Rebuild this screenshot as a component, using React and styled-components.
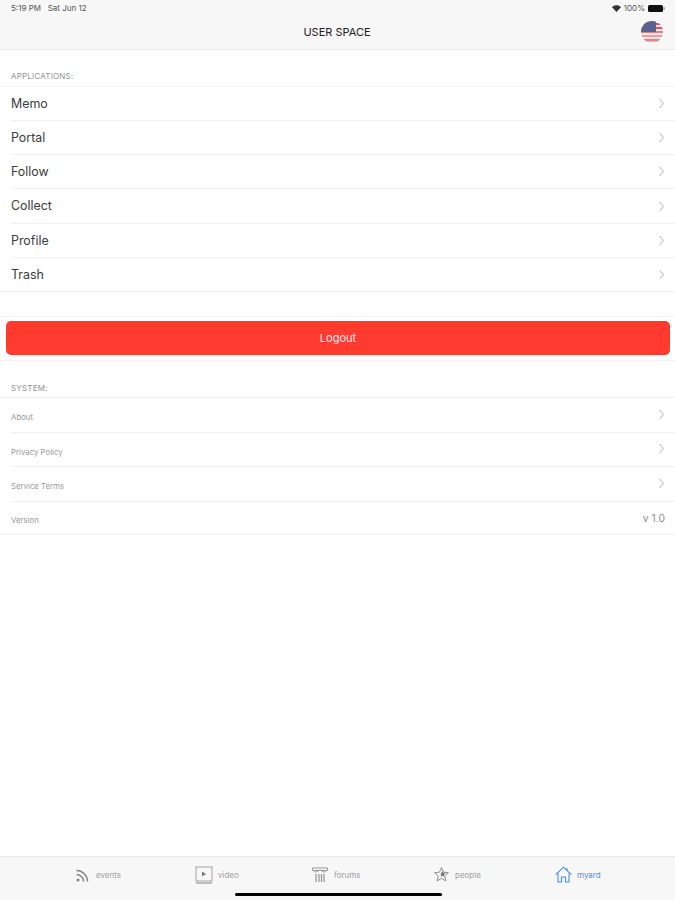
import React from "react";
import styled, {createGlobalStyle} from "styled-components";

const GlobalStyle = createGlobalStyle`
    html, body {
        margin: 0;
        padding: 0;
        background: #fff;
        font-family: Inter, "Liberation Sans", sans-serif;
    }
`;

const Page = styled.div`
    width: 675px;
    height: 900px;
    display: flex;
    flex-direction: column;
    overflow: hidden;
    position: relative;
`;

const TopBar = styled.header`
    height: 50px;
    flex: none;
    box-sizing: border-box;
    background: #f7f7f7;
    border-bottom: 1px solid #e9e9e9;
    display: flex;
    flex-direction: column;
`;

const StatusBar = styled.div`
    height: 16px;
    padding: 0 10px 0 11px;
    display: flex;
    align-items: center;
    justify-content: space-between;
    font-size: 8px;
    color: #555;
`;

const StatusRight = styled.div`
    display: flex;
    align-items: center;
    gap: 3px;
`;

const NavRow = styled.div`
    flex: 1;
    display: grid;
    grid-template-columns: 1fr auto 1fr;
    align-items: center;
    padding: 0 12px 2px 11px;
`;

const NavTitle = styled.div`
    font-size: 11px;
    color: #222;
    margin-top: 1px;
`;

const FlagWrap = styled.div`
    justify-self: end;
    width: 22px;
    height: 22px;
`;

const Content = styled.main`
    flex: 1;
`;

const SectionLabel = styled.div`
    height: ${props => props.height}px;
    box-sizing: border-box;
    padding: 0 11px ${props => props.bottom}px;
    display: flex;
    align-items: flex-end;
    font-size: 8px;
    color: #929292;
    letter-spacing: 0.2px;
    border-bottom: 1px solid #f1f1f1;
`;

const Row = styled.div`
    height: ${props => props.height}px;
    box-sizing: border-box;
    margin-left: ${props => props.last ? 0 : 11}px;
    padding: 0 10px 0 ${props => props.last ? 11 : 0}px;
    display: flex;
    align-items: center;
    justify-content: space-between;
    border-bottom: 1px solid #f0f0f0;
`;

const AppName = styled.span`
    font-size: 12.4px;
    color: #3a3a3a;
    margin-bottom: 1px;
`;

const SystemName = styled.span`
    font-size: 7.8px;
    color: #989898;
    margin-top: 4px;
`;

const RowChevron = styled.span`
    display: flex;
    margin-bottom: ${props => props.raised ? 2 : 0}px;
`;

const VersionText = styled.span`
    font-size: 10.4px;
    color: #8f8f8f;
`;

const LogoutBand = styled.div`
    margin-top: 24px;
    padding: 4px 5px 5px 6px;
    border-top: 1px solid #f4f4f4;
    border-bottom: 1px solid #f4f4f4;
`;

const LogoutButton = styled.button`
    display: block;
    width: 100%;
    height: 34px;
    padding: 0;
    border: none;
    border-radius: 5px;
    background: #ff3b30;
    color: #fdf0ef;
    font-family: inherit;
    font-size: 11px;
`;

const TabBar = styled.nav`
    height: 44px;
    flex: none;
    box-sizing: border-box;
    background: #f7f7f7;
    border-top: 1px solid #e9e9e9;
    display: flex;
    align-items: flex-start;
    padding: 9px 0 0 75px;
`;

const Tab = styled.div`
    width: ${props => props.width}px;
    display: flex;
    align-items: center;
    gap: 5px;
    font-size: 8px;
    color: ${props => props.active ? "#4a8ff0" : "#a0a0a0"};
`;

const HomeIndicator = styled.div`
    position: absolute;
    left: 235px;
    bottom: 4px;
    width: 207px;
    height: 3px;
    border-radius: 2px;
    background: #000;
`;

const Chevron = () => (
    <svg width="7" height="11" viewBox="0 0 7 11" fill="none" stroke="#cfcfd1" strokeWidth="1.2">
        <path d="M1.500 1l4 4.500-4 4.500" />
    </svg>
);

const WifiIcon = () => (
    <svg width="9" height="7" viewBox="0 0 9 7" fill="#333">
        <path d="M4.500 7L0 2.200C2.600-.4 6.400-.4 9 2.200z" />
    </svg>
);

const BatteryIcon = () => (
    <svg width="17" height="7" viewBox="0 0 17 7">
        <rect x="0" y="0" width="15" height="7" rx="1.5" fill="#111" />
        <rect x="15.500" y="2.200" width="1.200" height="2.600" fill="#888" />
    </svg>
);

const FlagIcon = () => (
    <svg width="22" height="22" viewBox="0 0 22 22">
        <defs>
            <clipPath id="flagClip"><circle cx="11" cy="11" r="11" /></clipPath>
        </defs>
        <g clipPath="url(#flagClip)">
            <rect width="22" height="22" fill="#f3e3e2" />
            <rect y="2" width="22" height="2" fill="#c9566a" />
            <rect y="6" width="22" height="2" fill="#c9566a" />
            <rect y="10" width="22" height="2" fill="#d9848c" />
            <rect y="14" width="22" height="2" fill="#e2a3a5" />
            <rect y="18" width="22" height="2.400" fill="#d9848c" />
            <rect width="15" height="11" fill="#5a628f" />
        </g>
    </svg>
);

const RssIcon = () => (
    <svg width="16" height="18" viewBox="0 -1 16 18" fill="none" stroke="#8a8a8a" strokeWidth="1.6">
        <circle cx="3" cy="13" r="1.600" fill="#8a8a8a" stroke="none" />
        <path d="M1.500 7.500a7 7 0 0 1 7 7" />
        <path d="M1.500 3.500a11 11 0 0 1 11 11" />
    </svg>
);

const VideoIcon = () => (
    <svg width="18" height="18" viewBox="0 0 18 18" fill="none" stroke="#a5a5a5">
        <rect x="1" y="1" width="16" height="14" />
        <path d="M1 17h16" strokeWidth="1.400" />
        <path d="M7 5.500l4 2.500-4 2.500z" fill="#777" stroke="none" />
    </svg>
);

const ForumsIcon = () => (
    <svg width="18" height="18" viewBox="0 0 18 18" fill="none" stroke="#999">
        <path d="M1.500 2h15v2.500h-15z" />
        <path d="M3 4.500c0 2 3 2 4 .5M15 4.500c0 2-3 2-4 .5M7 5c.8-1 3.200-1 4 0" />
        <path d="M5 8v8M8 8v8M10.500 8v8M13 8v8" strokeWidth="1.300" />
    </svg>
);

const StarIcon = () => (
    <svg width="17" height="17" viewBox="0 0 17 17" fill="none" stroke="#8e8e8e">
        <path d="M8.500 1.500l2 4.700 5 .5-3.800 3.300 1.200 5-4.400-2.700-4.400 2.700 1.200-5L1.500 6.700l5-.5z" />
        <path d="M9.500 5l1 2 2 .2-1.500 1.500.4 2-1.900-1-1.600 1V7.500z" fill="#777" stroke="none" />
    </svg>
);

const HomeIcon = () => (
    <svg width="17" height="17" viewBox="0 0 17 17" fill="none" stroke="#4a8ff0" strokeWidth="1.100">
        <path d="M.8 8.500L8.500 1.200l7.700 7.300" />
        <path d="M3 7.500V16h3.500v-5h4v5H14V7.500" />
        <path d="M12 2v2.500" />
    </svg>
);

const apps = ["Memo", "Portal", "Follow", "Collect", "Profile", "Trash"];
const appHeights = [34, 34, 34, 35, 34, 34];

const system = [
    {name: "About", height: 35},
    {name: "Privacy Policy", height: 34},
    {name: "Service Terms", height: 35},
    {name: "Version", height: 33, value: "v 1.0"},
];

const tabs = [
    {label: "events", Icon: RssIcon, width: 120},
    {label: "video", Icon: VideoIcon, width: 116},
    {label: "forums", Icon: ForumsIcon, width: 122},
    {label: "people", Icon: StarIcon, width: 122},
    {label: "myard", Icon: HomeIcon, width: 60, active: true},
];

const App = () => {
    return (
        <Page>
            <GlobalStyle />
            <TopBar>
                <StatusBar>
                    <span>5:19 PM &nbsp; Sat Jun 12</span>
                    <StatusRight>
                        <WifiIcon />
                        <span>100%</span>
                        <BatteryIcon />
                    </StatusRight>
                </StatusBar>
                <NavRow>
                    <span />
                    <NavTitle>USER SPACE</NavTitle>
                    <FlagWrap><FlagIcon /></FlagWrap>
                </NavRow>
            </TopBar>
            <Content>
                <SectionLabel height={37} bottom={5}>APPLICATIONS:</SectionLabel>
                {apps.map((name, i) => (
                    <Row key={name} height={appHeights[i]} last={i === apps.length - 1}>
                        <AppName>{name}</AppName>
                        <RowChevron><Chevron /></RowChevron>
                    </Row>
                ))}
                <LogoutBand>
                    <LogoutButton>Logout</LogoutButton>
                </LogoutBand>
                <SectionLabel height={37} bottom={4}>SYSTEM:</SectionLabel>
                {system.map((item, i) => (
                    <Row key={item.name} height={item.height} last={i === system.length - 1}>
                        <SystemName>{item.name}</SystemName>
                        {item.value
                            ? <VersionText>{item.value}</VersionText>
                            : <RowChevron raised><Chevron /></RowChevron>}
                    </Row>
                ))}
            </Content>
            <TabBar>
                {tabs.map(({label, Icon, width, active}) => (
                    <Tab key={label} width={width} active={active}>
                        <Icon />
                        <span>{label}</span>
                    </Tab>
                ))}
            </TabBar>
            <HomeIndicator />
        </Page>
    );
};

export default App;
